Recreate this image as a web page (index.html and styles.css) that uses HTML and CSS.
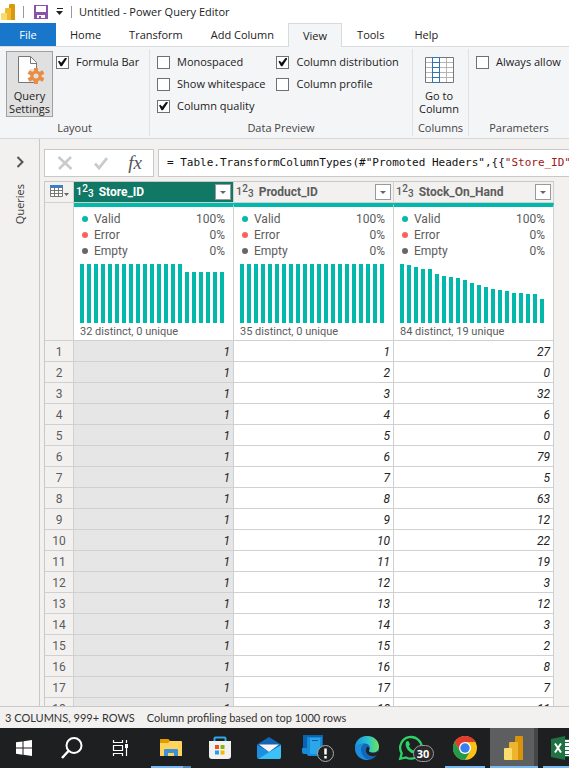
FILE: index.html
```html
<!DOCTYPE html>
<html lang="en">
<head>
<meta charset="utf-8">
<title>Untitled - Power Query Editor</title>
<link rel="stylesheet" href="styles.css">
</head>
<body>
<header class="titlebar">
  <svg class="app-logo" width="16" height="18" viewBox="0 0 16 18" aria-hidden="true"><path fill="#d9980d" d="M9 2q0-1 1-1h4q1 0 1 1v15H9z"/><path fill="#eebb2f" d="M5 6q0-1 1-1h5v12H5z"/><path fill="#f8dc6a" d="M1 11q0-1 1-1h5v7H2q-1 0-1-1z"/></svg>
  <span class="tick"></span>
  <button class="icon-btn save" aria-label="Save"><svg width="14" height="14" viewBox="0 0 14 14"><path fill="#8a53ab" d="M0 0h14v14H0z"/><path fill="#fff" d="M2 1h10v6H2zM3 10h8v3H7v-2H5v2H3z"/></svg></button>
  <button class="icon-btn" aria-label="Customize toolbar"><svg width="8" height="7" viewBox="0 0 8 7"><path fill="#222" d="M1 0h6v1H1zM0 3h7L3.500 7z"/></svg></button>
  <span class="tick"></span>
  <h1>Untitled - Power Query Editor</h1>
</header>
<nav class="tabs">
  <button class="file">File</button><button>Home</button><button>Transform</button><button>Add Column</button><button class="current">View</button><button>Tools</button><button>Help</button>
</nav>
<section class="ribbon">
  <div class="group layout">
    <div class="tools">
      <button class="big pressed"><svg width="28" height="30" viewBox="0 0 28 30"><path d="M2.500 1.500h12l6 6v20h-18z" fill="#fff" stroke="#777"/><path d="M14.500 1.500v7h6" fill="none" stroke="#777"/><path d="M14 14h11v13H14z" fill="#e0e0e0"/><g stroke="#ea8c43" stroke-width="4"><path d="M20 13v16M12.500 17l15 8M12.500 25l15-8"/></g><circle cx="20" cy="21" r="4" fill="#e0e0e0" stroke="#ea8c43" stroke-width="3"/></svg><span>Query<br>Settings</span></button>
      <div class="checks"><label><input type="checkbox" checked>Formula Bar</label></div>
    </div>
    <h2>Layout</h2>
  </div>
  <div class="group preview">
    <div class="tools">
      <div class="checks"><label><input type="checkbox">Monospaced</label><label><input type="checkbox">Show whitespace</label><label><input type="checkbox" checked>Column quality</label></div>
      <div class="checks"><label><input type="checkbox" checked>Column distribution</label><label><input type="checkbox">Column profile</label></div>
    </div>
    <h2>Data Preview</h2>
  </div>
  <div class="group columns">
    <div class="tools">
      <button class="big"><svg width="30" height="30" viewBox="0 0 30 30"><path d="M1 2h28v25H1z" fill="#fff"/><path d="M1 7.500h28M1 12.500h28M1 17.500h28M1 22.500h28M22.500 2v25" stroke="#b5b5b5"/><path d="M1.500 2.500h28v25h-28z" fill="none" stroke="#777"/><path d="M8.500 2v25.500M15.500 2v25.500M8 2.500h8M8 7.500h8M8 12.500h8M8 17.500h8M8 22.500h8M8 27.500h8" stroke="#2f75b5"/></svg><span>Go to<br>Column</span></button>
    </div>
    <h2>Columns</h2>
  </div>
  <div class="group params">
    <div class="tools"><div class="checks"><label><input type="checkbox">Always allow</label></div></div>
    <h2>Parameters</h2>
  </div>
</section>
<main class="workspace">
  <aside class="queries">
    <button class="icon-btn" aria-label="Expand queries"><svg width="8" height="12" viewBox="0 0 8 12"><path d="M1.500 1l5 5-5 5" fill="none" stroke="#555" stroke-width="2"/></svg></button>
    <span>Queries</span>
  </aside>
  <div class="editor">
    <div class="formula">
      <div class="formula-tools">
        <button class="icon-btn" aria-label="Cancel"><svg width="16" height="14" viewBox="0 0 16 14"><path d="M1.500 1l13 12M14 1L2 13" stroke="#cacaca" stroke-width="2.500"/></svg></button>
        <button class="icon-btn" aria-label="Commit"><svg width="14" height="14" viewBox="0 0 14 14"><path d="M1 7.500l4 4.500L13 2" fill="none" stroke="#cacaca" stroke-width="2.800"/></svg></button>
        <button class="icon-btn fx" aria-label="Add step"><i>fx</i></button>
      </div>
      <code class="formula-text">= Table.TransformColumnTypes(#"Promoted Headers",{{<b>"Store_ID"</b></code>
    </div>
    <div class="grid-area">
      <table>
        <colgroup><col class="num"><col class="data"><col class="data"><col class="data"></colgroup>
        <thead>
          <tr class="names">
            <th><button class="icon-btn" aria-label="Table menu"><svg width="20" height="14" viewBox="0 0 20 14"><path fill="#fff" d="M0 0h13v12H0z"/><path d="M.5 3v8.500h12V3M0 5.500h13M0 8.500h13M4.500 3v9M8.500 3v9" fill="none" stroke="#777"/><path fill="#3f7fbf" d="M0 0h13v3H0z"/><path fill="#666" d="M14 8h5l-2.500 3z"/></svg></button></th>
            <th class="picked"><div class="name"><span class="type">1<sup>2</sup><sub>3</sub></span><span>Store_ID</span><button aria-label="Filter Store_ID"></button></div></th>
            <th><div class="name"><span class="type">1<sup>2</sup><sub>3</sub></span><span>Product_ID</span><button aria-label="Filter Product_ID"></button></div></th>
            <th><div class="name"><span class="type">1<sup>2</sup><sub>3</sub></span><span>Stock_On_Hand</span><button aria-label="Filter Stock_On_Hand"></button></div></th>
          </tr>
          <tr class="profiles">
            <td class="corner"></td>
            <td><dl><div class="valid"><dt>Valid</dt><dd>100%</dd></div><div class="error"><dt>Error</dt><dd>0%</dd></div><div class="empty"><dt>Empty</dt><dd>0%</dd></div></dl>
              <svg class="chart" width="147" height="59" viewBox="0 0 147 59"><path d="M2 59v-59m7 59v-59m7 59v-59m7 59v-59m7 59v-59m7 59v-59m7 59v-59m7 59v-59m7 59v-59m7 59v-59m7 59v-59m7 59v-59m7 59v-59m7 59v-59m7 59v-59m7 59v-51m7 51v-51m7 51v-51m7 51v-51m7 51v-51m7 51v-51"/></svg><p>32 distinct, 0 unique</p></td>
            <td><dl><div class="valid"><dt>Valid</dt><dd>100%</dd></div><div class="error"><dt>Error</dt><dd>0%</dd></div><div class="empty"><dt>Empty</dt><dd>0%</dd></div></dl>
              <svg class="chart" width="147" height="59" viewBox="0 0 147 59"><path d="M2 59v-59m7 59v-59m7 59v-59m7 59v-59m7 59v-59m7 59v-59m7 59v-59m7 59v-59m7 59v-59m7 59v-59m7 59v-59m7 59v-59m7 59v-59m7 59v-59m7 59v-59m7 59v-59m7 59v-59m7 59v-59m7 59v-59m7 59v-59m7 59v-59"/></svg><p>35 distinct, 0 unique</p></td>
            <td><dl><div class="valid"><dt>Valid</dt><dd>100%</dd></div><div class="error"><dt>Error</dt><dd>0%</dd></div><div class="empty"><dt>Empty</dt><dd>0%</dd></div></dl>
              <svg class="chart" width="147" height="59" viewBox="0 0 147 59"><path d="M2 59v-59m7 59v-58m7 58v-56m7 56v-54m7 54v-54m7 54v-49m7 49v-47m7 47v-46m7 46v-45m7 45v-43m7 43v-40m7 40v-38m7 38v-36m7 36v-34m7 34v-33m7 33v-32m7 32v-30m7 30v-30m7 30v-29m7 29v-29m7 29v-24"/></svg><p>84 distinct, 19 unique</p></td>
          </tr>
        </thead>
        <tbody>
          <tr><th>1</th><td>1</td><td>1</td><td>27</td></tr>
          <tr><th>2</th><td>1</td><td>2</td><td>0</td></tr>
          <tr><th>3</th><td>1</td><td>3</td><td>32</td></tr>
          <tr><th>4</th><td>1</td><td>4</td><td>6</td></tr>
          <tr><th>5</th><td>1</td><td>5</td><td>0</td></tr>
          <tr><th>6</th><td>1</td><td>6</td><td>79</td></tr>
          <tr><th>7</th><td>1</td><td>7</td><td>5</td></tr>
          <tr><th>8</th><td>1</td><td>8</td><td>63</td></tr>
          <tr><th>9</th><td>1</td><td>9</td><td>12</td></tr>
          <tr><th>10</th><td>1</td><td>10</td><td>22</td></tr>
          <tr><th>11</th><td>1</td><td>11</td><td>19</td></tr>
          <tr><th>12</th><td>1</td><td>12</td><td>3</td></tr>
          <tr><th>13</th><td>1</td><td>13</td><td>12</td></tr>
          <tr><th>14</th><td>1</td><td>14</td><td>3</td></tr>
          <tr><th>15</th><td>1</td><td>15</td><td>2</td></tr>
          <tr><th>16</th><td>1</td><td>16</td><td>8</td></tr>
          <tr><th>17</th><td>1</td><td>17</td><td>7</td></tr>
          <tr><th>18</th><td>1</td><td>18</td><td>11</td></tr>
        </tbody>
      </table>
    </div>
  </div>
</main>
<footer class="status"><span>3 COLUMNS, 999+ ROWS</span><span>Column profiling based on top 1000 rows</span></footer>
<nav class="taskbar">
  <button aria-label="Start"><svg width="16" height="16" viewBox="0 0 16 16"><path fill="#fff" d="M0 2.300L6.500 1.400V7.500H0zM7.500 1.200L16 0v7.500H7.500zM0 8.500h6.500v6.200L0 13.800zM7.500 8.500H16V16l-8.500-1.200z"/></svg></button>
  <button aria-label="Search"><svg width="22" height="22" viewBox="0 0 22 22"><circle cx="13" cy="8.500" r="7.500" fill="none" stroke="#fff" stroke-width="2"/><path d="M7.500 14L1 21" stroke="#fff" stroke-width="2.500"/></svg></button>
  <button aria-label="Task view"><svg width="17" height="16" viewBox="0 0 17 16"><path d="M1.500 0v2.500h9V0M1.500 16v-2.500h9V16M1.500 5.500h9v5h-9zM14.500 0v3M14.500 8v8" fill="none" stroke="#fff" stroke-width="1.200"/><path fill="#fff" d="M13 4h3v4h-3z"/></svg></button>
  <button class="open stacked first" aria-label="File Explorer"><svg width="22" height="20" viewBox="0 0 22 20"><path fill="#e59a00" d="M0 1.500Q0 1 .8 1h7.700l1.500 2h11v4H0z"/><path fill="#ffd45c" d="M0 5h8l2-2h11q1 0 1 1v14H0z"/><path fill="#3c91d8" d="M4 18v-6q0-1 1-1h12q1 0 1 1v6h-4v-3H8v3z"/></svg></button>
  <button aria-label="Store"><svg width="24" height="24" viewBox="0 0 24 24"><path d="M6.500 6V2.500q0-1 1-1h9q1 0 1 1V6" fill="none" stroke="#2aa9ee" stroke-width="2"/><path fill="#f1f1f1" d="M1 5h22v15q0 3-3 3H4q-3 0-3-3z"/><path fill="#f04e23" d="M7 9h4v4H7z"/><path fill="#7db813" d="M12.500 9h4v4h-4z"/><path fill="#18a3ea" d="M7 14.500h4v4H7z"/><path fill="#fcb600" d="M12.500 14.500h4v4h-4z"/></svg></button>
  <button aria-label="Mail"><svg width="24" height="22" viewBox="0 0 24 22"><path fill="#1464b4" d="M0 7.500L12 0l12 7.500V16H0z"/><path fill="#f5f5f5" d="M2 7.500h20L12 15z"/><path fill="#1b8fe0" d="M0 8l24 14H2q-2 0-2-2z"/><path fill="#3bc0f7" d="M24 8v12q0 2-2 2H1z"/></svg></button>
  <button aria-label="Phone Link"><svg width="34" height="28" viewBox="0 0 34 28"><path fill="#0b62ae" d="M2 1h20v16H2z"/><path fill="#168bd8" d="M1 14h20v6H3q-2 0-2-2zM6 3h15v19H8q-2 0-2-2z"/><path fill="#2ba6ea" d="M9 4h10v16H9z"/><path stroke="#0b5ca8" d="M11 6.500h6"/><circle cx="24.500" cy="19.500" r="8" fill="#222" stroke="#aaa"/><path stroke="#fff" stroke-width="2.500" d="M24.500 14.500v6m0 1.500v2.500"/></svg></button>
  <button aria-label="Edge"><svg width="24" height="24" viewBox="0 0 24 24"><defs><linearGradient id="edge" x1="0" x2="1"><stop offset="0" stop-color="#1595dc"/><stop offset=".55" stop-color="#2fc4cc"/><stop offset="1" stop-color="#70e456"/></linearGradient></defs><circle cx="12" cy="12" r="12" fill="#1267b8"/><path fill="url(#edge)" d="M0 12C0 5 5 0 12 0c7 0 12 5 12 10.500 0 4-3 6-6.500 6-3 0-4-1.300-3.500-2.200 2-2.600.5-6.800-4-6.800C5 7.500 1 10 0 12z"/><path fill="#1a8ddb" d="M0 12c2-3.500 6-4.500 9-4-3 2-4 6-2 10 1.500 3 4 4.800 7 5.800C7 25 0 20 0 12z"/><path fill="#222" d="M14.200 14c-.8 1.700 1 2.800 3.600 2.800 2 0 3.500-.6 4.800-1.600L24 17l-2 2c-5 3-11 0-11-4.500 0-1.600.6-3 1.500-3.800 1.700.3 2.400 2 1.700 3.300z"/></svg></button>
  <button aria-label="WhatsApp"><svg width="36" height="28" viewBox="0 0 36 28"><path d="M2.200 24.800l1.500-5.500A10.800 10.800 0 1 1 8 23.400z" fill="none" stroke="#2bd366" stroke-width="2.300"/><path fill="#2bd366" d="M8 8q2-2 3 0l1 2.500-1.200 1.800q1.500 3 4.500 4.200l1.700-1.800 3 1.500q.5 2.500-2 3.500-4 .8-8-3.500Q6.500 11.500 8 8z"/><rect x="15.500" y="11.500" width="20" height="16" rx="8" fill="#292929" stroke="#999"/><text x="25" y="24" text-anchor="middle">30</text></svg></button>
  <button class="open" aria-label="Chrome"><svg width="24" height="24" viewBox="0 0 24 24"><circle cx="12" cy="12" r="12" fill="#fbc116"/><path fill="#e33b2e" d="M1.600 6A12 12 0 0 1 22.400 6H12v6L6.800 15z"/><path fill="#229a4c" d="M1.600 6l5.200 9L12 18l5.200-3L12 24A12 12 0 0 1 1.600 6z"/><circle cx="12" cy="12" r="6" fill="#fff"/><circle cx="12" cy="12" r="4.700" fill="#377ff0"/></svg></button>
  <button class="open active" aria-label="Power BI"><svg width="20" height="24" viewBox="0 0 20 24"><path fill="#d9930b" d="M11 1q0-1 1-1h6q1 0 1 1v23h-8z"/><path fill="#edb52c" d="M5 7q0-1 1-1h7q1 0 1 1v17H5z"/><path fill="#fadd6d" d="M0 13q0-1 1-1h6q1 0 1 1v11H1q-1 0-1-1z"/></svg></button>
  <button class="open last" aria-label="Excel"><svg width="30" height="24" viewBox="0 0 30 24"><path fill="#fff" d="M12 3h16v18H12z"/><path d="M12 6.500h15M12 10.500h15M12 14.500h15M12 18.500h15M18.500 4v17" stroke="#207245"/><path d="M12 3.500h15.500v17H12" fill="none" stroke="#207245"/><path fill="#207245" d="M0 3l14-3v24L0 21z"/><path d="M4 7.500l6 9M10 7.500l-6 9" stroke="#fff" stroke-width="2"/></svg></button>
</nav>
</body>
</html>
```
FILE: styles.css
```css
* { box-sizing: border-box; }

body {
  margin: 0;
  height: 100vh;
  display: flex;
  flex-direction: column;
  overflow: hidden;
  background: #f2f1f0;
  color: #222;
  font: 11px/16px "Open Sans", "Noto Sans", sans-serif;
}

button {
  margin: 0;
  padding: 0;
  border: 0;
  background: none;
  color: inherit;
  font: inherit;
}

svg { display: block; }
h1, h2, p, dl, dd { margin: 0; font-size: inherit; font-weight: 400; }
.icon-btn { display: flex; align-items: center; justify-content: center; }

.titlebar {
  display: flex;
  align-items: center;
  height: 23px;
  flex: none;
  background: #fff;
}
.app-logo { margin-right: 7px; }
.tick { width: 1px; height: 12px; background: #999; }
.save { margin: 0 8px 0 10px; }
.titlebar .icon-btn + .tick { margin: 0 7px; }

.tabs {
  display: flex;
  height: 24px;
  flex: none;
  background: #fff;
  border-bottom: 1px solid #d8dbdd;
}
.tabs button { padding: 0 13px; border: 1px solid transparent; border-bottom: 0; }
.tabs .file { width: 56px; background: #1877ca; color: #fff; }
.tabs .current { padding: 0 14px; background: #f4f5f7; border-color: #d8dbdd; margin-bottom: -1px; }
.tabs .current ~ button { padding: 0 14px; }

.ribbon {
  display: flex;
  height: 92px;
  flex: none;
  padding: 2px 0;
  background: #f4f5f7;
  border-bottom: 1px solid #d5d8da;
}
.group {
  display: flex;
  flex-direction: column;
  border-right: 1px solid #dfe1e3;
  white-space: nowrap;
}
.group h2 { text-align: center; color: #444; }
.group .tools { display: flex; flex: 1; padding: 2px 0 0 6px; }
.layout { flex: 0 0 150px; }
.preview { flex: 0 0 263px; }
.columns { flex: 0 0 56px; }
.params { flex: 1 0 100px; border: 0; }
.group.preview .tools { gap: 11px; }
.group.params .tools, .group.preview .tools { padding-left: 7px; }
.group.columns .tools { padding: 2px 3px 0 0; justify-content: center; }
.big {
  display: flex;
  flex-direction: column;
  align-items: center;
  width: 47px;
  height: 66px;
  padding-top: 3px;
  border: 1px solid transparent;
  line-height: 13px;
}
.big span { margin-top: 4px; }
.pressed { background: #e0e0e0; border-color: #a0a0a0; }
.checks { display: flex; flex-direction: column; gap: 6px; padding-top: 3px; }
.layout .checks { padding-left: 3px; }
.checks label { display: flex; align-items: center; gap: 7px; }
.checks input {
  appearance: none;
  width: 13px;
  height: 13px;
  margin: 0;
  border: 1px solid #707070;
  background: #fff;
}
.checks input:checked::before {
  content: "";
  display: block;
  width: 9px;
  height: 9px;
  margin: 1px;
  background: #111;
  clip-path: polygon(0 45%, 15% 35%, 36% 58%, 82% 0, 100% 12%, 44% 98%, 28% 98%);
}

.workspace { display: flex; flex: 1; min-height: 0; }
.queries {
  display: flex;
  flex-direction: column;
  align-items: center;
  gap: 16px;
  flex: 0 0 40px;
  padding-top: 17px;
  border-right: 1px solid #c8c8c8;
}
.queries span { writing-mode: vertical-rl; transform: rotate(180deg); color: #333; }
.editor {
  display: flex;
  flex-direction: column;
  flex: 1;
  min-width: 0;
  gap: 4px;
  padding: 10px 0 0 4px;
}
.formula { display: flex; gap: 4px; height: 28px; flex: none; }
.formula-tools {
  display: flex;
  align-items: center;
  justify-content: space-between;
  width: 110px;
  padding: 0 11px 0 12px;
  background: #fff;
  border: 1px solid #c8c8c8;
}
.fx { color: #555; font: 19px/20px "Liberation Serif", serif; }
.formula-text {
  flex: 1;
  padding: 0 8px;
  overflow: hidden;
  white-space: pre;
  background: #fff;
  border: 1px solid #c8c8c8;
  border-right: 0;
  color: #111;
  font: 11px/26px "DejaVu Sans Mono", monospace;
}
.formula-text b { font-weight: 400; color: #a31515; }

.grid-area { flex: 1; min-height: 0; overflow: hidden; }
table {
  width: 510px;
  table-layout: fixed;
  border-collapse: separate;
  border-spacing: 0;
  border: solid #c8c8c8;
  border-width: 1px 0 0 1px;
  font-family: Roboto, sans-serif;
  font-size: 12px;
  color: #5c5c5c;
}
.num { width: 29px; }
.data { width: 160px; }
th, td { padding: 0; border: solid #d0d0d0; border-width: 0 1px 1px 0; }
.names th { height: 21px; background: #f2f1f0; }
.names .icon-btn { width: 100%; padding-left: 1px; }
.names .picked { background: #117865; color: #fff; }
.name { display: flex; align-items: center; height: 20px; padding: 0 2px; gap: 5px; font-weight: 700; }
.name button {
  width: 16px;
  height: 16px;
  margin-left: auto;
  display: grid;
  place-items: center;
  background: #fff;
  border: 1px solid #999;
}
.name button::before {
  content: "";
  border: 3px solid transparent;
  border-top-color: #666;
  border-bottom: 0;
}
.type { font-size: 11px; font-weight: 500; }
.type sup, .type sub { font-size: 10px; line-height: 0; }
.type sup { vertical-align: 3px; }
.type sub { vertical-align: -2px; }

.profiles td { height: 138px; vertical-align: top; background: #fff; border-top: 4px solid #01b8aa; }
.profiles td.corner { background: #f2f1f0; border-top: 0; }
.profiles dl { padding: 4px 8px 0; }
.profiles dl div { display: flex; align-items: center; line-height: 16px; }
.profiles dl div::before { content: ""; width: 6px; height: 6px; margin-right: 6px; border-radius: 50%; background: #666; }
.profiles .valid::before { background: #01b8aa; }
.profiles .error::before { background: #fd625e; }
.profiles dd { margin-left: auto; }
.chart { margin: 5px 0 0 6px; fill: none; stroke: #01b8aa; stroke-width: 4px; }
.profiles p { padding: 1px 0 0 6px; font-size: 11px; line-height: 16px; }

tbody th, tbody td { height: 21px; padding-top: 2px; line-height: 18px; }
tbody th { background: #f2f1f0; font-weight: 400; }
tbody td { padding-right: 3px; background: #fff; color: #222; font-style: italic; text-align: right; }
tbody th + td { background: #e6e6e6; }

.status {
  display: flex;
  align-items: center;
  gap: 12px;
  height: 22px;
  flex: none;
  padding-left: 5px;
  background: #f2f1f0;
  border-top: 1px solid #c8c8c8;
  font-family: Lato, sans-serif;
  color: #333;
}

.taskbar { display: flex; height: 40px; flex: none; background: #1e1f20; }
.taskbar button {
  position: relative;
  display: flex;
  align-items: center;
  justify-content: center;
  flex: 0 0 48px;
  margin-right: 1px;
}
.taskbar button:nth-child(-n+3) { margin-right: 0; }
.taskbar .first { margin-left: 3px; }
.taskbar .last { padding-left: 6px; }
.taskbar .open::after {
  content: "";
  position: absolute;
  inset: auto 4px 0;
  height: 2px;
  background: #76b9f5;
}
.taskbar .stacked::after { background: linear-gradient(90deg, #76b9f5 80%, #5287b5 80%); }
.taskbar .active { background: linear-gradient(90deg, #5d5e5f 92%, #454647 92%); }
.taskbar .active::after { inset: auto 0 0; }
.taskbar text { fill: #fff; font: 700 11px "Open Sans", sans-serif; }
```
